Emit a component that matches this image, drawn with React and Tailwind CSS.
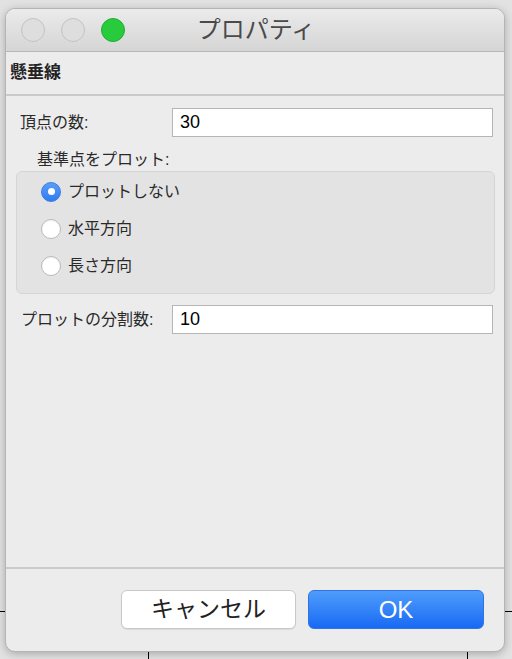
import { useState } from 'react';

const FONT = "font-['Liberation_Sans','Noto_Sans_CJK_JP',sans-serif]";

const OPTIONS = ['プロットしない', '水平方向', '長さ方向'];

const Radio = ({ checked, label, onClick }) => (
  <button type="button" onClick={onClick} className="flex h-[37px] items-center gap-[7px] text-left">
    {checked ? (
      <span className="flex h-[20px] w-[20px] items-center justify-center rounded-full bg-gradient-to-b from-[#5a9cf8] to-[#2f7bf5] border border-[#3a7de0]">
        <span className="h-[7px] w-[7px] rounded-full bg-white" />
      </span>
    ) : (
      <span className="h-[20px] w-[20px] rounded-full border border-[#b9b9b9] bg-white shadow-[inset_0_1px_1px_rgba(0,0,0,0.05)]" />
    )}
    <span className="text-[16px] text-[#2a2a2a]">{label}</span>
  </button>
);

const Field = ({ label, value, onChange, labelPad }) => (
  <div className="flex items-center">
    <label className={`w-[166px] text-[16px] text-[#2a2a2a] ${labelPad}`}>{label}</label>
    <input
      type="text"
      value={value}
      onChange={(e) => onChange(e.target.value)}
      className="h-[29px] w-[321px] border border-[#b5b5b5] bg-white px-[7px] text-[18px] text-black outline-none"
    />
  </div>
);

const App = () => {
  const [vertices, setVertices] = useState('30');
  const [divisions, setDivisions] = useState('10');
  const [plot, setPlot] = useState(0);

  return (
    <div className={`relative h-[659px] w-[512px] overflow-hidden bg-[#e2e2e2] ${FONT}`}>
      {/* desktop lines behind the window */}
      <div className="absolute left-0 top-[611px] h-px w-[512px] bg-black" />
      <div className="absolute left-[148px] top-[600px] h-[59px] w-px bg-black" />
      <div className="absolute left-[467px] top-[600px] h-[59px] w-px bg-black" />

      <div className="relative ml-[5px] mt-[8px] flex h-[644px] w-[500px] flex-col overflow-hidden rounded-[10px] border border-[#b4b4b4] bg-[#ececec] shadow-[0_2px_8px_rgba(0,0,0,0.25)]">
        {/* Title bar */}
        <div className="relative flex h-[43px] shrink-0 items-center border-b border-[#b8b8b8] bg-gradient-to-b from-[#ebebeb] to-[#d5d5d5]">
          <div className="flex gap-[16px] pl-[15px]">
            <span className="h-[24px] w-[24px] rounded-full border border-[#c2c2c2] bg-[#dedede]" />
            <span className="h-[24px] w-[24px] rounded-full border border-[#c2c2c2] bg-[#dedede]" />
            <span className="h-[24px] w-[24px] rounded-full border border-[#1fae33] bg-[#27cb3c]" />
          </div>
          <div className="absolute inset-0 flex items-center justify-center pl-[2px] text-[24px] text-[#4a4a4a]">
            プロパティ
          </div>
        </div>

        {/* Header */}
        <div className="flex h-[44px] shrink-0 items-center border-b-2 border-[#cacaca] pl-[4px] text-[17px] font-bold text-[#222]">
          懸垂線
        </div>

        {/* Body */}
        <div className="flex flex-1 flex-col pt-[12px]">
          <Field label="頂点の数:" value={vertices} onChange={setVertices} labelPad="pl-[14px]" />

          <div className="pl-[31px] pt-[13px] text-[16px] leading-[20px] text-[#2a2a2a]">基準点をプロット:</div>

          <div className="ml-[10px] mr-[9px] mt-[1px] flex h-[123px] flex-col rounded-[6px] border border-[#d5d5d5] bg-[#e3e3e3] pl-[24px] pt-[1px]">
            {OPTIONS.map((opt, i) => (
              <Radio key={opt} label={opt} checked={plot === i} onClick={() => setPlot(i)} />
            ))}
          </div>

          <div className="pt-[11px]">
            <Field label="プロットの分割数:" value={divisions} onChange={setDivisions} labelPad="pl-[15px]" />
          </div>
        </div>

        {/* Footer */}
        <div className="flex h-[84px] shrink-0 items-start justify-end gap-[12px] border-t-2 border-[#cbcbcb] pr-[20px] pt-[21px]">
          <button
            type="button"
            className="h-[39px] w-[175px] rounded-[6px] border border-[#c8c8c8] bg-white text-[23px] text-[#222] shadow-[0_1px_1px_rgba(0,0,0,0.08)]"
          >
            キャンセル
          </button>
          <button
            type="button"
            className="h-[39px] w-[176px] rounded-[6px] border border-[#2f74e6] bg-gradient-to-b from-[#4f9cfb] to-[#1769f4] text-[24px] text-white"
          >
            OK
          </button>
        </div>
      </div>
    </div>
  );
};

export default App;
